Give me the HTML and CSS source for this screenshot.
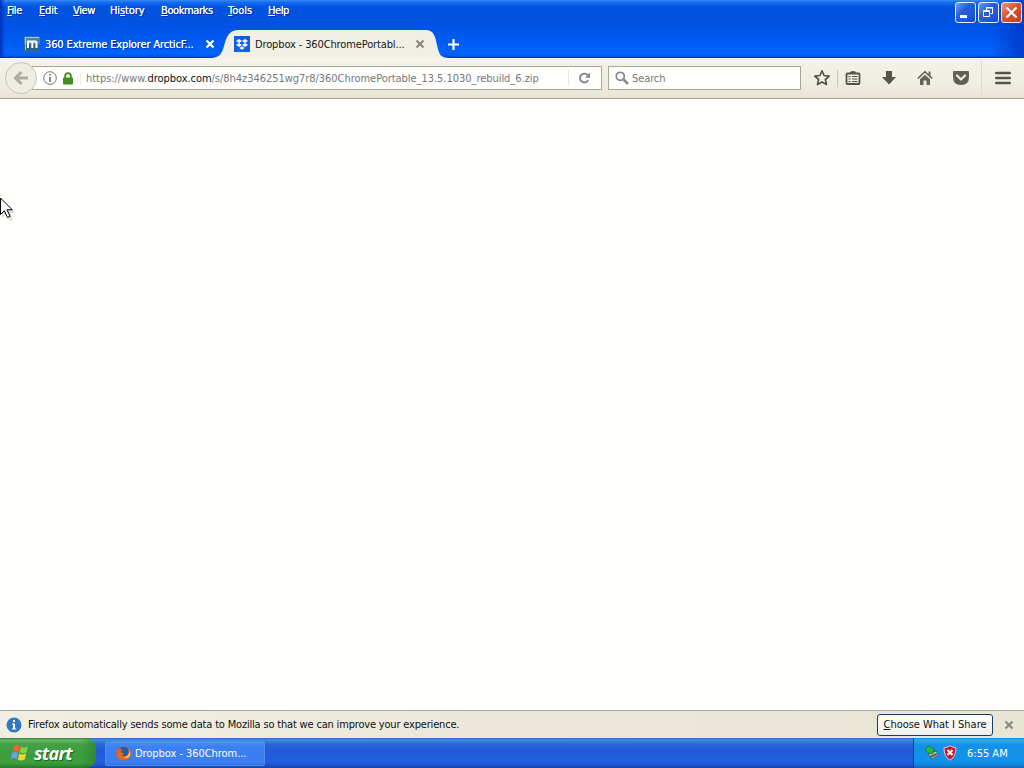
FILE: index.html
```html
<!DOCTYPE html>
<html lang="en">
<head>
<meta charset="utf-8">
<title>Dropbox - 360ChromePortable</title>
<link rel="stylesheet" href="styles.css">
</head>
<body>
<div class="screen">
  <header class="titlebar">
    <div class="menu-row">
      <nav class="menus">
        <span class="m-file"><u>F</u>ile</span><span class="m-edit"><u>E</u>dit</span><span class="m-view"><u>V</u>iew</span><span class="m-history">Hi<u>s</u>tory</span><span class="m-bookmarks"><u>B</u>ookmarks</span><span class="m-tools"><u>T</u>ools</span><span class="m-help"><u>H</u>elp</span>
      </nav>
      <div class="controls">
        <span class="control"><svg width="19" height="19"><path d="M4 12h7v3H4z" fill="#fff"/></svg></span>
        <span class="control"><svg width="19" height="19" fill="none" stroke="#fff"><path d="M7.500 7.500V4.500h6v6H11.500"/><path d="M7 5h7"/><path d="M4.500 7.500h6v6h-6zM4 8.500h7"/></svg></span>
        <span class="control close"><svg width="19" height="19"><path d="M4.500 4.500l10 10M14.500 4.500l-10 10" stroke="#fff" stroke-width="2.200"/></svg></span>
      </div>
    </div>
    <div class="tabs">
      <div class="tab-idle">
        <svg class="favicon" width="16" height="16"><rect width="16" height="15" y=".5" rx="1" fill="#4585a8"/><path d="M0 8h16v7.500H0z" fill="#2c6287"/><path d="M1 1.500h14M1.500 1v13" stroke="#a9cddd"/><path d="M4 12V5M3 5.500h8q1.500 0 1.500 2V12M8.300 5.500V12" fill="none" stroke="#fff" stroke-width="2"/></svg>
        <span class="tab-title idle-title">360 Extreme Explorer ArcticF...</span>
        <svg class="tab-close" width="10" height="10"><path d="M1.500 1.500l7 7M8.500 1.500l-7 7" stroke="#fff" stroke-width="2.200"/></svg>
      </div>
      <div class="tab-active">
        <svg class="tab-shape" width="244" height="28"><path d="M2 28C12 28 14 23 16 16S20 0 30 0H217C226 0 227 6 229 15S232 28 242 28Z" fill="#f2f0e6"/></svg>
        <div class="tab-content">
          <svg class="favicon" width="16" height="16"><rect width="16" height="16" fill="#0a62e4"/><path d="M5 3l3 2-3 2-3-2zM11 3l3 2-3 2-3-2zM5 7l3 2-3 2-3-2zM11 7l3 2-3 2-3-2zM8 10.300l2.700 1.700L8 13.700 5.300 12z" fill="#fff"/></svg>
          <span class="tab-title active-title">Dropbox - 360ChromePortabl...</span>
          <svg class="tab-close" width="10" height="10"><path d="M1.500 1.500l7 7M8.500 1.500l-7 7" stroke="#8a8981" stroke-width="2.200"/></svg>
        </div>
      </div>
      <svg class="new-tab" width="11" height="11"><path d="M5.500 0v11M0 5.500h11" stroke="#fff" stroke-width="2.200"/></svg>
    </div>
  </header>

  <div class="toolbar">
    <div class="back"><svg width="16" height="16"><path d="M8.500 2L2.500 8l6 6M3 8h12" fill="none" stroke="#adaba3" stroke-width="3"/></svg></div>
    <div class="urlbar">
      <svg class="info" width="14" height="14"><circle cx="7" cy="7" r="6.300" fill="none" stroke="#73736f"/><path d="M6.200 3h1.600v1.600H6.200zM6.200 6h1.600v5H6.200z" fill="#6a6a6a"/></svg>
      <svg class="lock" width="10" height="13"><path d="M2.200 6V4q0-2.900 2.800-2.900T7.800 4v2" fill="none" stroke="#458e22" stroke-width="1.900"/><rect y="5.500" width="10" height="7" rx=".8" fill="#458e22"/></svg>
      <i class="url-divider"></i>
      <span class="url">https://www.<b>dropbox.com</b>/s/8h4z346251wg7r8/360ChromePortable_13.5.1030_rebuild_6.zip</span>
      <i class="reload-divider"></i>
      <svg class="reload" width="13" height="12"><path d="M10.200 8.300A4.400 4.400 0 1 1 9.800 3.200" fill="none" stroke="#858585" stroke-width="1.900"/><path d="M12 .8v5H7z" fill="#858585"/></svg>
    </div>
    <div class="search">
      <svg width="14" height="14"><circle cx="5.300" cy="5.300" r="4" fill="none" stroke="#898989" stroke-width="1.800"/><path d="M8 8l5 5" stroke="#898989" stroke-width="2.500"/></svg>
      <span>Search</span>
    </div>
    <div class="tools">
      <svg width="18" height="18"><path d="M9 1.800l2.100 4.700 5.100.6-3.800 3.400 1.100 5L9 13l-4.500 2.500 1.100-5L1.800 7.100l5.100-.6z" fill="none" stroke="#55544d" stroke-width="1.700" stroke-linejoin="round"/></svg>
      <i class="tool-divider"></i>
      <svg class="list" width="16" height="16"><path d="M2.500 3.500h11q1 0 1 1v8.500q0 1-1 1h-11q-1 0-1-1V4.500q0-1 1-1z" fill="none" stroke="#55544d" stroke-width="1.800"/><path d="M5 3q0-2 3-2t3 2z" fill="#55544d"/><path d="M3.500 6.500h2M7 6.500h5.500M3.500 9h2M7 9h5.500M3.500 11.500h2M7 11.500h5.500" stroke="#55544d" stroke-width="1.200"/></svg>
      <svg class="download" width="16" height="16"><path d="M5 1h6v6h4l-7 7.500L1 7h4z" fill="#55544d"/></svg>
      <svg class="home" width="16" height="16"><path d="M.8 8.500L8 1.800l7.200 6.700" fill="none" stroke="#5c5b54" stroke-width="1.500"/><path d="M11.500 1.500H13.500V6l-2-2zM8 4.800L13 9.300V15H9.500v-4.500H6.500V15H3V9.300z" fill="#65645d"/></svg>
      <svg class="pocket" width="16" height="16"><path d="M1 1h14q1 0 1 1v5q0 8-8 8T0 7V2q0-1 1-1z" fill="#605f58"/><path d="M4 5.500l4 4 4-4" fill="none" stroke="#efede3" stroke-width="2.200" stroke-linecap="round" stroke-linejoin="round"/></svg>
      <i class="menu-divider"></i>
      <svg class="hamburger" width="16" height="14"><path d="M1.300 2h13.400M1.300 7h13.400M1.300 12h13.400" stroke="#55544d" stroke-width="2.600" stroke-linecap="round"/></svg>
    </div>
  </div>

  <main class="page">
    <svg class="pointer" width="16" height="26"><path d="M2 3v18l4-4 4 7 3-1-3-7h5z" fill="#777" opacity=".25"/><path d="M.5 1v16.500l3.800-3.700 3.200 6.700 2.600-1.200-3.100-6.500h5.300z" fill="#fff" stroke="#000"/></svg>
  </main>

  <div class="notice">
    <svg class="notice-icon" width="16" height="16"><circle cx="8" cy="8" r="7.500" fill="#3079c2"/><path d="M7 3h2v2H7zM6 6.500h3v5h1.200v1H5.800v-1H7v-4H6z" fill="#fff"/></svg>
    <span class="notice-text">Firefox automatically sends some data to Mozilla so that we can improve your experience.</span>
    <button class="choose"><u>C</u>hoose What I Share</button>
    <svg class="notice-close" width="10" height="10"><path d="M1.500 1.500l7 7M8.500 1.500l-7 7" stroke="#8a8981" stroke-width="2.200"/></svg>
  </div>

  <footer class="taskbar">
    <div class="start">
      <svg width="20" height="20"><path d="M4 3q3-2 6 0L8.500 9q-3-2-6 0z" fill="#ee6335"/><path d="M11 3.500q3 2 7 0L16.500 9.500q-3 2-7 0z" fill="#87cf3c"/><path d="M2.200 10q3-2 6 0l-1.500 6q-3-2-6 0z" fill="#6b9df5"/><path d="M9.200 10.500q3 2 7 0l-1.500 6q-4 2-7 0z" fill="#f8d332"/></svg>
      <span>start</span>
    </div>
    <div class="task">
      <svg width="15" height="15"><circle cx="7.500" cy="7.500" r="7" fill="#d94e08"/><circle cx="8" cy="6" r="5" fill="#245ca8"/><path d="M1 2l2 1.500Q5 2.500 6 4L5 6.500l3 1-2 2q3 2 6-1 2-3 0-6 4 3 2.500 7Q12 14.500 7 14.500 1 14 .5 8z" fill="#e96716"/><path d="M12 3q2 3 0 6-2 3-5 2 4 3 7-1 1-4-2-7z" fill="#ffc04c"/></svg>
      <span>Dropbox - 360Chrom...</span>
    </div>
    <div class="tray">
      <svg class="device" width="16" height="16"><path d="M4 9l8-3 3 4-7 4z" fill="#b7c2bb" stroke="#415b66"/><path d="M6 12l7-3" stroke="#40515c" stroke-width="1.500"/><path d="M1 4l4-3 6 4-2 1v3l-4-1-2-1z" fill="#29bd37" stroke="#116e2a" stroke-width=".7"/></svg>
      <svg class="shield" width="14" height="16"><path d="M7 .7q3 2 6 2 0 9-6 12.500Q1 12 1 2.700q3 0 6-2z" fill="#c9172d" stroke="#e9c3d3"/><path d="M4.500 5l5 5M9.500 5l-5 5" stroke="#fff" stroke-width="2"/></svg>
      <span>6:55 AM</span>
    </div>
  </footer>
</div>
</body>
</html>
```
FILE: styles.css
```css
* { box-sizing: border-box; }
body { margin: 0; font: 11px/16px "DejaVu Sans Condensed", "DejaVu Sans", sans-serif; letter-spacing: -.4px; color: #111; }
.screen { width: 1024px; height: 768px; display: flex; flex-direction: column; overflow: hidden; background: #fffffe; }
svg { display: block; flex: none; }
i { flex: none; }
span { white-space: nowrap; }
u { text-underline-offset: 1px; text-decoration-thickness: 1px; }
.titlebar { height: 58px; flex: none; color: #fff; background: linear-gradient(90deg, #0030be 0, transparent 5px, transparent 990px, #003ccb 1024px), linear-gradient(#388cf5 0, #1670f3 2px, #0253de 7px, #0052e2 24px, #005af0 38px, #0264fc 53px, #0157ec 56px, #0030b8 58px); }
.menu-row { height: 30px; display: flex; justify-content: space-between; }
.menus { display: flex; padding: 3px 0 0 7px; text-shadow: 0 0 .5px #fff, 1px 1px 1px #002b98; }
.menus span { flex: none; }
.m-file { width: 32px; }
.m-edit { width: 34px; letter-spacing: -.2px; }
.m-view { width: 37px; }
.m-history { width: 51px; letter-spacing: -.1px; }
.m-bookmarks { width: 67px; }
.m-tools { width: 40px; letter-spacing: 0; }
.controls { display: flex; gap: 2px; padding: 2px 2px 0 0; }
.control { width: 21px; height: 21px; border: 1px solid #e5edff; border-radius: 3px; background: linear-gradient(135deg, #6f9cf4, #2b5bd7 40%, #2358df 70%, #1744b4); }
.close { background: linear-gradient(135deg, #ee9a7d, #d95330 45%, #c63b15); }
.tabs { height: 28px; display: flex; }
.tab-idle { width: 208px; flex: none; padding-left: 24px; display: flex; align-items: center; }
.favicon { margin-right: 5px; }
.tab-title { flex: none; padding-top: 1px; letter-spacing: -.13px; }
.idle-title { width: 160px; text-shadow: 0 0 .5px #fff, 1px 1px 1px #002b98; }
.tab-idle .tab-close { z-index: 1; }
.tab-active { width: 240px; flex: none; display: grid; }
.tab-shape, .tab-content { grid-area: 1 / 1; }
.tab-content { display: flex; align-items: center; padding-left: 26px; color: #171717; }
.active-title { width: 160px; }
.new-tab { margin-top: 9px; }
.toolbar { height: 41px; flex: none; display: flex; align-items: center; background: linear-gradient(#f5f3e9, #efecdf 75%, #e8e4d5); border-bottom: 1px solid #a5a28f; }
.back { width: 32px; height: 32px; margin-left: 5px; border: 1px solid #c8c5b8; border-radius: 50%; background: #efede2; display: flex; align-items: center; justify-content: center; z-index: 1; }
.urlbar { width: 570px; height: 24px; margin-left: -5px; border: 1px solid #a9a796; background: #fffffe; display: flex; align-items: center; padding-left: 10px; }
.lock { margin-left: 6px; }
.url-divider { height: 14px; width: 1px; margin-left: 7px; background: #eeeee9; }
.url { width: 482px; margin-left: 5px; padding-top: 2px; color: #777; letter-spacing: -.04px; }
.url b { font-weight: normal; color: #111; }
.reload-divider { height: 16px; width: 1px; background: #e9e8e2; }
.reload { margin-left: 9px; }
.search { width: 193px; height: 24px; margin-left: 6px; border: 1px solid #a9a796; background: #fffffe; display: flex; align-items: center; padding-left: 6px; color: #777; letter-spacing: -.1px; }
.search span { margin: 2px 0 0 3px; }
.tools { display: flex; align-items: center; height: 40px; padding-left: 12px; }
.tool-divider { width: 1px; height: 17px; margin-left: 6px; background: #c9c6b8; }
.list { margin-left: 7px; }
.download, .home, .pocket { margin-left: 20px; }
.menu-divider { width: 1px; height: 34px; margin-left: 12px; background: #ddd9cc; }
.hamburger { margin-left: 13px; }
.page { flex: 1; padding-top: 98px; }
.notice { height: 28px; flex: none; display: flex; align-items: center; background: linear-gradient(90deg, #f1efe4, #ebe8da 50%, #e9e5d5); border-top: 1px solid #aaa89e; }
.notice-icon { margin-left: 6px; }
.notice-text { width: 849px; margin-left: 6px; letter-spacing: -.18px; }
.choose { width: 116px; height: 22px; padding: 0; border: 1px solid #173e68; border-radius: 3px; background: linear-gradient(#fff, #f0efe9); font: inherit; letter-spacing: -.02px; color: #111; }
.notice-close { margin-left: 11px; }
.taskbar { height: 30px; flex: none; display: flex; color: #fff; background: linear-gradient(#2867d3 0, #428bed 2px, #2867dc 6px, #2459d7 12px, #235fdf 24px, #2056ce 27px, #1941a4 30px); }
.start { width: 96px; height: 30px; border-radius: 0 10px 10px 0; display: flex; align-items: center; padding-left: 10px; background: linear-gradient(90deg, transparent 85%, #287c2a99), linear-gradient(#318336 0, #63b964 2px, #45a047 6px, #389d3a 18px, #3ba13d 25px, #267629 30px); }
.start span { margin-left: 4px; font: italic bold 18px/28px "Open Sans", sans-serif; letter-spacing: -.7px; text-shadow: 1px 1px 1px #225a22; }
.task { width: 160px; height: 25px; margin: 3px 0 0 9px; border: 1px solid #4b8df4; border-radius: 2px; display: flex; align-items: center; padding-left: 10px; background: linear-gradient(#4a91fb, #3b7ff2 5px, #3b7ef1 21px, #3271df); }
.task span { margin-left: 4px; letter-spacing: -.05px; }
.tray { width: 111px; height: 30px; margin-left: auto; border-left: 1px solid #12439b; display: flex; align-items: center; padding-left: 10px; background: linear-gradient(#118ee5 0, #24b0f6 2px, #1291e9 7px, #1092ec 23px, #1385da 27px, #1262b5 30px); }
.shield { margin-left: 3px; }
.tray span { margin-left: 10px; padding-top: 1px; letter-spacing: 0; }
```
